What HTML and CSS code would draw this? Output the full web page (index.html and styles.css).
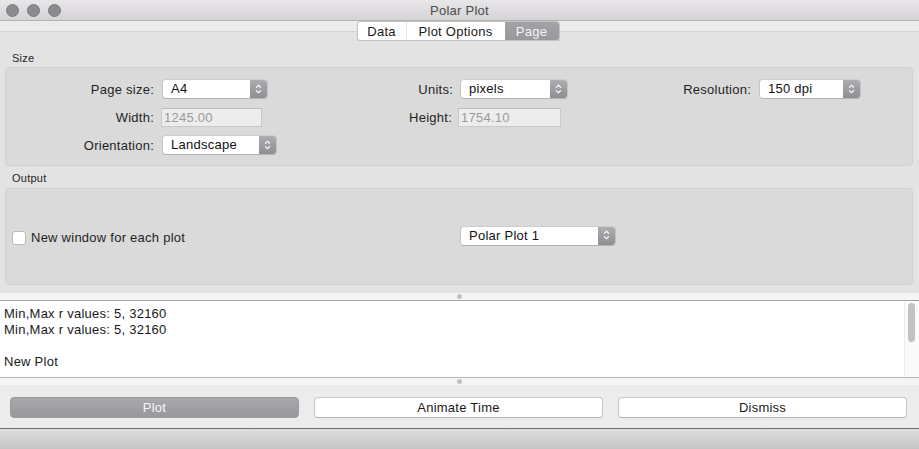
FILE: index.html
```html
<!DOCTYPE html>
<html lang="en">
<head>
    <meta charset="UTF-8">
    <title>Polar Plot</title>
    <link rel="stylesheet" href="styles.css">
</head>
<body>
    <div class="window">
        <div class="titlebar">
            <div class="lights"><span></span><span></span><span></span></div>
            <div class="title">Polar Plot</div>
            <div></div>
        </div>

        <div class="tabbar">
            <div class="tabs">
                <button class="tab tab-data">Data</button>
                <button class="tab tab-options">Plot Options</button>
                <button class="tab tab-page active">Page</button>
            </div>
        </div>

        <div class="page">
            <div class="section-label">Size</div>
            <div class="group size-grid">
                <label class="lbl">Page size:</label>
                <div class="combo w-pagesize"><span class="combo-text">A4</span><span class="combo-arrows"><svg width="17" height="20" viewBox="0 0 17 20"><path d="M6 8.6 L8.5 6.3 L11 8.6 M6 11.4 L8.5 13.7 L11 11.4" fill="none" stroke="#fff" stroke-width="1.2"/></svg></span></div>
                <label class="lbl">Units:</label>
                <div class="combo w-units"><span class="combo-text">pixels</span><span class="combo-arrows"><svg width="17" height="20" viewBox="0 0 17 20"><path d="M6 8.6 L8.5 6.3 L11 8.6 M6 11.4 L8.5 13.7 L11 11.4" fill="none" stroke="#fff" stroke-width="1.2"/></svg></span></div>
                <label class="lbl">Resolution:</label>
                <div class="combo w-res"><span class="combo-text">150 dpi</span><span class="combo-arrows"><svg width="17" height="20" viewBox="0 0 17 20"><path d="M6 8.6 L8.5 6.3 L11 8.6 M6 11.4 L8.5 13.7 L11 11.4" fill="none" stroke="#fff" stroke-width="1.2"/></svg></span></div>

                <label class="lbl">Width:</label>
                <input class="field w-width" value="1245.00" disabled>
                <label class="lbl">Height:</label>
                <input class="field w-height" value="1754.10" disabled>
                <div></div>
                <div></div>

                <label class="lbl">Orientation:</label>
                <div class="combo w-orient"><span class="combo-text">Landscape</span><span class="combo-arrows"><svg width="17" height="20" viewBox="0 0 17 20"><path d="M6 8.6 L8.5 6.3 L11 8.6 M6 11.4 L8.5 13.7 L11 11.4" fill="none" stroke="#fff" stroke-width="1.2"/></svg></span></div>
            </div>

            <div class="section-label output-label">Output</div>
            <div class="group output">
                <label class="check"><span class="checkbox"></span>New window for each plot</label>
                <div class="combo w-plot"><span class="combo-text">Polar Plot 1</span><span class="combo-arrows"><svg width="17" height="20" viewBox="0 0 17 20"><path d="M6 8.6 L8.5 6.3 L11 8.6 M6 11.4 L8.5 13.7 L11 11.4" fill="none" stroke="#fff" stroke-width="1.2"/></svg></span></div>
            </div>
        </div>

        <div class="splitter"><span class="grip"></span></div>

        <div class="log">
            <div class="log-text">
                <div>Min,Max r values: 5, 32160</div>
                <div>Min,Max r values: 5, 32160</div>
                <div>&nbsp;</div>
                <div>New Plot</div>
            </div>
            <div class="scrollbar"><div class="thumb"></div></div>
        </div>

        <div class="splitter"><span class="grip"></span></div>

        <div class="actions">
            <button class="btn btn-default">Plot</button>
            <button class="btn">Animate Time</button>
            <button class="btn">Dismiss</button>
        </div>

        <div class="statusbar"></div>
    </div>
</body>
</html>
```

FILE: styles.css
```css
body {
    margin: 0;
    padding: 0;
    background-color: #e3e3e3;
    font-family: "Liberation Sans", Arial, sans-serif;
    font-size: 13px;
    letter-spacing: 0.25px;
    color: #1f1f1f;
}
.window {
    width: 919px;
    height: 449px;
    overflow: hidden;
    display: flex;
    flex-direction: column;
}

/* title bar */
.titlebar {
    height: 20px;
    display: grid;
    grid-template-columns: 1fr auto 1fr;
    align-items: center;
    background: linear-gradient(#e9e7e9, #d5d3d5);
    border-bottom: 1px solid #b3b3b3;
}
.lights {
    display: flex;
    gap: 8px;
    padding-left: 6px;
}
.lights span {
    width: 11px;
    height: 11px;
    border-radius: 50%;
    background-color: #8c8b8d;
    border: 0.5px solid #7b7a7c;
}
.title {
    color: #4a4a4a;
    font-size: 13px;
}

/* tabs */
.tabbar {
    height: 20px;
    display: flex;
    justify-content: center;
    background: linear-gradient(#ececec 0 10px, #d3d3d3 10px 11px, #e3e3e3 11px);
}
.tabs {
    display: flex;
    height: 20px;
    margin-right: 3px;
    border: 1px solid #c3c3c3;
    border-radius: 4px;
    overflow: hidden;
    box-sizing: border-box;
    background-color: white;
    box-shadow: 0 0.5px 1px rgba(0, 0, 0, 0.15);
}
.tab {
    font: inherit;
    letter-spacing: inherit;
    color: #1a1a1a;
    background: white;
    border: none;
    padding: 0;
    height: 18px;
}
.tab-data {
    width: 49px;
    border-right: 1px solid #e2e2e2;
}
.tab-options {
    width: 98px;
}
.tab-page {
    width: 54px;
}
.tab.active {
    background: linear-gradient(#a3a3a7, #98989c);
    color: #f4f4f4;
}

/* page */
.page {
    height: 252px;
    display: flex;
    flex-direction: column;
    background-color: #e3e3e3;
}
.section-label {
    font-size: 11px;
    line-height: 16px;
    padding: 9px 12px 1px;
    color: #1f1f1f;
}
.output-label {
    padding: 4px 12px 2px;
}
.group {
    margin: 0 6px 0 5px;
    background-color: #dadada;
    border: 1px solid #d1d1d1;
    border-radius: 4px;
}
.size-grid {
    display: grid;
    grid-template-columns: 156px 208px 90px 200px 99px 1fr;
    grid-template-rows: 20px 20px 20px;
    row-gap: 8px;
    align-items: center;
    padding: 11px 0 10px;
}
.lbl {
    text-align: right;
    padding-right: 8px;
    color: #1f1f1f;
}
.size-grid .lbl:nth-child(3) {
    padding-right: 7px;
}

.combo {
    display: flex;
    height: 20px;
    box-sizing: border-box;
    background-color: white;
    border: 1px solid #c4c4c4;
    border-top-color: #cdcdcd;
    border-bottom-color: #b2b2b2;
    border-radius: 4px;
    overflow: hidden;
}
.combo-text {
    flex: 1;
    padding-left: 8px;
    line-height: 18px;
    color: #111;
}
.combo-arrows {
    width: 17px;
    display: flex;
    align-items: center;
    justify-content: center;
    background: linear-gradient(#adadb1, #8f8f93);
}
.combo-arrows svg {
    margin-top: -1px;
}
.w-pagesize { width: 106px; }
.w-units { width: 108px; }
.w-res { width: 102px; }
.w-orient { width: 115px; }
.w-plot { width: 156px; }

.field {
    height: 19px;
    box-sizing: border-box;
    font: inherit;
    letter-spacing: inherit;
    padding: 0 2px;
    color: #9a9a9a;
    background-color: #ededed;
    border: 1px solid #c9c9c9;
    border-top-color: #bdbdbd;
}
.w-width {
    width: 101px;
    margin-left: -1px;
}
.w-height {
    width: 103px;
    margin-left: -2px;
}

.output {
    height: 95px;
    display: grid;
    grid-template-columns: 448px 1fr;
    align-items: center;
    padding-left: 6px;
}
.check {
    display: flex;
    align-items: center;
    gap: 5px;
    margin-top: 2px;
}
.checkbox {
    width: 14px;
    height: 14px;
    box-sizing: border-box;
    background-color: white;
    border: 1px solid #b8b8b8;
    border-radius: 3px;
}
.output .combo {
    margin-top: -2px;
}

/* splitter and log */
.splitter {
    height: 7px;
    display: flex;
    justify-content: center;
    align-items: center;
    background-color: #f5f5f5;
}
.grip {
    width: 5px;
    height: 5px;
    border-radius: 50%;
    background-color: #c2c2c2;
}
.log {
    height: 76px;
    display: flex;
    background-color: white;
    border-top: 1px solid #a3a3a3;
    border-bottom: 1px solid #b5b5b5;
}
.log-text {
    flex: 1;
    padding: 5px 4px 0;
    line-height: 16px;
    color: #1a1a1a;
}
.scrollbar {
    width: 15px;
    box-sizing: border-box;
    background-color: #fafafa;
    border-left: 1px solid #ececec;
    padding: 2px 0 0 3px;
}
.thumb {
    width: 7px;
    height: 39px;
    border-radius: 4px;
    background-color: #c2c2c2;
}

/* buttons */
.actions {
    height: 44px;
    display: flex;
    gap: 15px;
    padding: 12px 12px 0 10px;
    box-sizing: border-box;
    background-color: #ececec;
    border-bottom: 1px solid #6f6f6f;
}
.btn {
    width: 289px;
    height: 21px;
    font: inherit;
    letter-spacing: inherit;
    color: #1a1a1a;
    background-color: white;
    border: 1px solid #c6c6c6;
    border-bottom-color: #b4b4b4;
    border-radius: 4px;
    padding: 0;
}
.btn-default {
    background: linear-gradient(#a8a8ac, #98989c);
    border-color: #9a9a9e;
    color: #f6f6f6;
}
.statusbar {
    flex: 1;
    background: linear-gradient(#dddddd, #c4c4c4);
}
```
